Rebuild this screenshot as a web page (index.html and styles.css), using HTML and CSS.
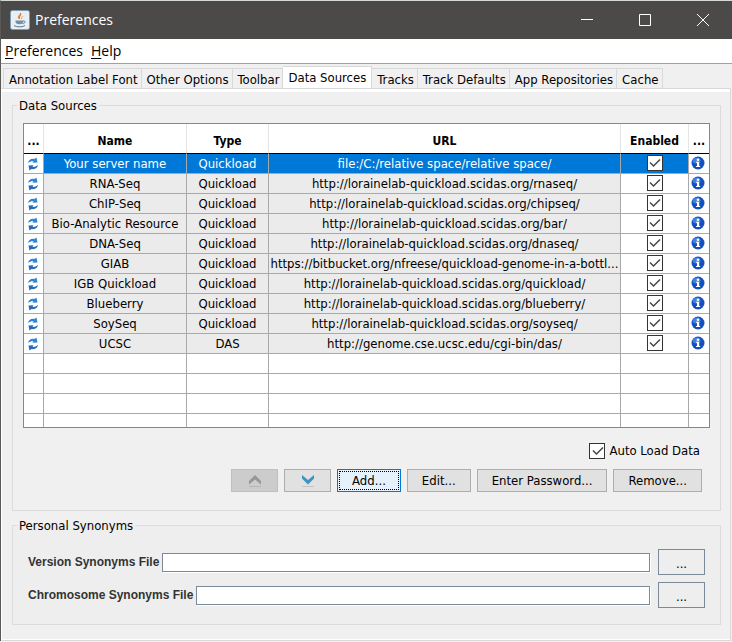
FILE: index.html
```html
<!DOCTYPE html>
<html lang="en">
<head>
    <meta charset="utf-8">
    <title>Preferences</title>
    <link rel="stylesheet" href="styles.css">
</head>
<body>
    <svg class="defs" aria-hidden="true">
        <symbol id="refresh" viewBox="0 0 12 14">
            <path d="M1 6C1.500 3 4 1.300 7.500 2L9.500 .5L10.500 5.500L5.500 5.700L6.500 4.200C4.500 3.900 3 4.500 1 6Z" fill="#2f86d0"/>
            <path d="M11 8C10.500 11 8 12.700 4.500 12L2.500 13.500L1.500 8.500L6.500 8.300L5.500 9.800C7.500 10.100 9 9.500 11 8Z" fill="#2569b8"/>
        </symbol>
        <symbol id="info" viewBox="0 0 14 14">
            <circle cx="7" cy="7" r="6.500" fill="#1450bf"/>
            <ellipse cx="5.500" cy="4.500" rx="4" ry="3" fill="#3f80e0"/>
            <circle cx="7" cy="3.700" r="1.300" fill="#fff"/>
            <path d="M5 5.800H8.200V10H9.200V11H5V10H6V6.800H5Z" fill="#fff"/>
        </symbol>
    </svg>

    <div class="window">
        <header class="titlebar">
            <svg class="app-icon" viewBox="0 0 20 20" aria-hidden="true">
                <rect x=".5" y=".5" width="19" height="19" rx="2" fill="#e9eef2" stroke="#7e9db3"/>
                <path d="M9.500 9C6.500 6.500 10.500 5.500 10.500 3C12 5.500 8.500 6 9.500 9Z" fill="#e8791c" stroke="#e8791c"/>
                <path d="M11.500 9C11 7.500 12.500 7 13 6" fill="none" stroke="#e8a05c"/>
                <path d="M5.500 10.500H13V12C13 15 6 15 5.500 12Z" fill="#6f8faa"/>
                <path d="M13 11C16 10.500 15.500 13.500 12.500 13.500M4 15.500C6 17.300 13 17.300 15 15.500" fill="none" stroke="#527b9b"/>
            </svg>
            <h1>Preferences</h1>
            <div class="window-controls">
                <button aria-label="Minimize"><svg viewBox="0 0 12 12"><path d="M0 5.500H12"/></svg></button>
                <button aria-label="Maximize"><svg viewBox="0 0 12 12"><path d="M.5 .5H11.500V11.500H.5Z"/></svg></button>
                <button aria-label="Close"><svg viewBox="0 0 12 12"><path d="M0 0L12 12M12 0L0 12"/></svg></button>
            </div>
        </header>

        <nav class="menubar">
            <button><u>P</u>references</button>
            <button><u>H</u>elp</button>
        </nav>

        <div class="tabs" role="tablist">
            <button role="tab">Annotation Label Font</button>
            <button role="tab">Other Options</button>
            <button role="tab">Toolbar</button>
            <button role="tab" class="active" aria-selected="true">Data Sources</button>
            <button role="tab">Tracks</button>
            <button role="tab">Track Defaults</button>
            <button role="tab">App Repositories</button>
            <button role="tab">Cache</button>
        </div>

        <main class="panel">
            <fieldset class="sources">
                <legend>Data Sources</legend>
                <table>
                    <colgroup>
                        <col class="col-icon"><col class="col-name"><col class="col-type"><col><col class="col-enabled"><col class="col-info">
                    </colgroup>
                    <thead>
                        <tr><th>...</th><th>Name</th><th>Type</th><th>URL</th><th>Enabled</th><th>...</th></tr>
                    </thead>
                    <tbody>
                        <tr class="selected">
                            <td><svg class="refresh"><use href="#refresh"/></svg></td>
                            <td>Your server name</td><td>Quickload</td><td>file:/C:/relative space/relative space/</td>
                            <td><input type="checkbox" aria-label="Enable Your server name" checked></td>
                            <td><svg class="info"><use href="#info"/></svg></td>
                        </tr>
                        <tr>
                            <td><svg class="refresh"><use href="#refresh"/></svg></td>
                            <td>RNA-Seq</td><td>Quickload</td><td>http://lorainelab-quickload.scidas.org/rnaseq/</td>
                            <td><input type="checkbox" aria-label="Enable RNA-Seq" checked></td>
                            <td><svg class="info"><use href="#info"/></svg></td>
                        </tr>
                        <tr>
                            <td><svg class="refresh"><use href="#refresh"/></svg></td>
                            <td>ChIP-Seq</td><td>Quickload</td><td>http://lorainelab-quickload.scidas.org/chipseq/</td>
                            <td><input type="checkbox" aria-label="Enable ChIP-Seq" checked></td>
                            <td><svg class="info"><use href="#info"/></svg></td>
                        </tr>
                        <tr>
                            <td><svg class="refresh"><use href="#refresh"/></svg></td>
                            <td>Bio-Analytic Resource</td><td>Quickload</td><td>http://lorainelab-quickload.scidas.org/bar/</td>
                            <td><input type="checkbox" aria-label="Enable Bio-Analytic Resource" checked></td>
                            <td><svg class="info"><use href="#info"/></svg></td>
                        </tr>
                        <tr>
                            <td><svg class="refresh"><use href="#refresh"/></svg></td>
                            <td>DNA-Seq</td><td>Quickload</td><td>http://lorainelab-quickload.scidas.org/dnaseq/</td>
                            <td><input type="checkbox" aria-label="Enable DNA-Seq" checked></td>
                            <td><svg class="info"><use href="#info"/></svg></td>
                        </tr>
                        <tr>
                            <td><svg class="refresh"><use href="#refresh"/></svg></td>
                            <td>GIAB</td><td>Quickload</td><td>https://bitbucket.org/nfreese/quickload-genome-in-a-bottl...</td>
                            <td><input type="checkbox" aria-label="Enable GIAB" checked></td>
                            <td><svg class="info"><use href="#info"/></svg></td>
                        </tr>
                        <tr>
                            <td><svg class="refresh"><use href="#refresh"/></svg></td>
                            <td>IGB Quickload</td><td>Quickload</td><td>http://lorainelab-quickload.scidas.org/quickload/</td>
                            <td><input type="checkbox" aria-label="Enable IGB Quickload" checked></td>
                            <td><svg class="info"><use href="#info"/></svg></td>
                        </tr>
                        <tr>
                            <td><svg class="refresh"><use href="#refresh"/></svg></td>
                            <td>Blueberry</td><td>Quickload</td><td>http://lorainelab-quickload.scidas.org/blueberry/</td>
                            <td><input type="checkbox" aria-label="Enable Blueberry" checked></td>
                            <td><svg class="info"><use href="#info"/></svg></td>
                        </tr>
                        <tr>
                            <td><svg class="refresh"><use href="#refresh"/></svg></td>
                            <td>SoySeq</td><td>Quickload</td><td>http://lorainelab-quickload.scidas.org/soyseq/</td>
                            <td><input type="checkbox" aria-label="Enable SoySeq" checked></td>
                            <td><svg class="info"><use href="#info"/></svg></td>
                        </tr>
                        <tr>
                            <td><svg class="refresh"><use href="#refresh"/></svg></td>
                            <td>UCSC</td><td>DAS</td><td>http://genome.cse.ucsc.edu/cgi-bin/das/</td>
                            <td><input type="checkbox" aria-label="Enable UCSC" checked></td>
                            <td><svg class="info"><use href="#info"/></svg></td>
                        </tr>
                        <tr class="empty"><td></td><td></td><td></td><td></td><td></td><td></td></tr>
                        <tr class="empty"><td></td><td></td><td></td><td></td><td></td><td></td></tr>
                        <tr class="empty"><td></td><td></td><td></td><td></td><td></td><td></td></tr>
                        <tr class="empty last"><td></td><td></td><td></td><td></td><td></td><td></td></tr>
                    </tbody>
                </table>

                <label class="autoload"><input type="checkbox" checked> Auto Load Data</label>

                <div class="actions">
                    <button class="move" aria-label="Move up" disabled>
                        <svg viewBox="0 0 14 14"><path d="M1 7L7 1L13 7V10.500L7 5.500L1 10.500Z" fill="#979797"/><path d="M1 12.500H13" stroke="#b5b5b5"/></svg>
                    </button>
                    <button class="move" aria-label="Move down">
                        <svg viewBox="0 0 14 14"><path d="M1 1L7 6L13 1V4.500L7 10.500L1 4.500Z" fill="#3b94c4"/><path d="M1 12.500H13" stroke="#c4c4c4"/></svg>
                    </button>
                    <button class="default">Add...</button>
                    <button>Edit...</button>
                    <button>Enter Password...</button>
                    <button>Remove...</button>
                </div>
            </fieldset>

            <fieldset class="synonyms">
                <legend>Personal Synonyms</legend>
                <div class="file-row">
                    <label for="version-file">Version Synonyms File</label>
                    <input type="text" id="version-file">
                    <button aria-label="Browse version synonyms file">...</button>
                </div>
                <div class="file-row">
                    <label for="chromosome-file">Chromosome Synonyms File</label>
                    <input type="text" id="chromosome-file">
                    <button aria-label="Browse chromosome synonyms file">...</button>
                </div>
            </fieldset>
        </main>
    </div>
</body>
</html>
```
FILE: styles.css
```css
* { box-sizing: border-box; }
body { margin: 0; background: #f0f0f0; color: #000; font: 13px/16px "DejaVu Sans Condensed", "DejaVu Sans", sans-serif; font-stretch: condensed; }
button { font: inherit; color: inherit; margin: 0; padding: 0; border: 0; background: none; white-space: nowrap; }
.defs { display: none; }
.window { border-left: 1px solid #5a5958; border-top: 1px solid #d5d9d5; }

.titlebar { display: flex; align-items: center; height: 38px; padding-left: 9px; background: #4c4a48; color: #fff; }
.titlebar h1 { flex: 1; margin: 0 0 0 5px; font: 14px/20px "Open Sans", sans-serif; }
.app-icon { width: 20px; height: 20px; }
.window-controls { display: flex; }
.window-controls button { display: grid; place-items: center; width: 58px; height: 38px; }
.window-controls svg { width: 12px; height: 12px; fill: none; stroke: #fff; }

.menubar { display: flex; gap: 8px; height: 25px; padding-left: 4px; background: #fff; border-bottom: 1px solid #a0a0a0; font: 14px/24px "Open Sans", sans-serif; }
.menubar u { text-underline-offset: 2px; }

.tabs { display: flex; align-items: flex-end; height: 24px; padding-left: 2px; }
.tabs button { height: 20px; padding: 2px 3px 0 5px; background: #f0f0f0; border: 1px solid #d9d9d9; border-width: 1px 1px 0 0; }
.tabs button:first-child { border-left-width: 1px; }
.tabs button.active { height: 22px; padding: 0 5px; background: #fff; }

.panel { margin: 0 1px 0 0; padding: 8px 9px 15px 10px; background: #f0f0f0; border: 1px solid #d9d9d9; border-left-color: #fff; box-shadow: inset 0 3px #fff, inset 0 -1px #fff; }
fieldset { min-width: 0; margin: 0; border: 1px solid #dcdcdc; }
legend { height: 17px; padding: 0 2px; line-height: 17px; }
.sources { padding: 9px 10px 18px; }
.sources legend { margin-left: -6px; }

table { width: 100%; table-layout: fixed; border-collapse: separate; border-spacing: 0; border: 1px solid #828790; background: #fff; }
.col-icon { width: 20px; }
.col-name { width: 143px; }
.col-type { width: 82px; }
.col-enabled { width: 68px; }
.col-info { width: 20px; }
th { height: 30px; padding: 4px 0 0; border-right: 1px solid #e5e5e5; border-bottom: 1px solid #000; font-size: 12px; line-height: 16px; }
td { height: 20px; padding: 0; border-right: 1px solid #a9a9a9; border-bottom: 1px solid #a9a9a9; background: #ebebeb; text-align: center; vertical-align: top; line-height: 19px; white-space: nowrap; overflow: hidden; }
th:last-child, td:last-child { border-right: 0; }
td:first-child, td:nth-child(n+5), .empty td { background: #fff; }
.selected td:nth-child(n+2):nth-child(-n+5) { background: #0078d7; color: #fff; }
.last td { height: 13px; border-bottom: 0; }
td svg { display: block; }
.refresh { width: 12px; height: 14px; margin: 3px 0 0 3px; }
.info { width: 14px; height: 14px; margin: 2px 0 0 2px; }

input[type="checkbox"] { appearance: none; display: block; width: 16px; height: 16px; margin: 0; border: 1px solid #333; background: #fff; }
input[type="checkbox"]:checked::before { content: ""; display: block; height: 14px; background: #444; clip-path: polygon(2px 7px, 3px 6px, 6px 9px, 12px 3px, 13px 4px, 6px 11px); }
td input[type="checkbox"] { margin: 1px auto 0; }

.autoload { display: flex; justify-content: flex-end; gap: 4px; margin-top: 15px; }
.autoload input { flex: none; }
.sources .autoload { padding-right: 10px; }
.actions { display: flex; justify-content: flex-end; gap: 6px; margin-top: 10px; padding-right: 8px; }
.actions button { height: 23px; padding: 0 14px; background: #e1e1e1; border: 1px solid #adadad; }
.actions .move { width: 47px; padding: 0; }
.actions .move svg { display: block; width: 14px; height: 14px; margin: 0 auto; }
.actions button:disabled { background: #ccc; border-color: #bfbfbf; }
.actions .default { background: #e5f1fb; border-color: #0078d7; outline: 1px dotted #000; outline-offset: -3px; }

.synonyms { display: grid; gap: 7px; margin-top: 6px; padding: 15px 15px 16px; background: #eee; }
.synonyms legend { margin-left: -11px; }
.file-row { display: flex; align-items: center; height: 26px; }
.file-row label { color: #333; font: bold 12px/16px "Liberation Sans", sans-serif; }
.file-row input { flex: 1; min-width: 0; height: 19px; margin: 0 8px 0 3px; border: 1px solid #7a8a99; background: #fff; box-shadow: 1px 1px #fff; }
.file-row button { width: 47px; height: 26px; padding-top: 3px; border: 1px solid #7a8a99; }
```
